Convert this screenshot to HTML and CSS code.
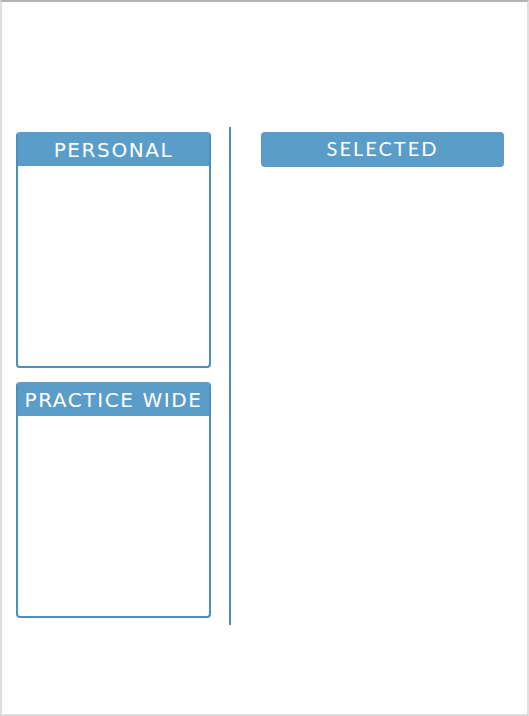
FILE: index.html
```html
<!DOCTYPE html>
<html lang="en">
<head>
    <meta charset="UTF-8">
    <title>Lists</title>
    <link rel="stylesheet" href="styles.css">
</head>
<body>
<div class="frame">
    <div class="columns">
        <div class="left-col">
            <div class="card">
                <div class="card-head">PERSONAL</div>
                <div class="card-body"></div>
            </div>
            <div class="card">
                <div class="card-head">PRACTICE WIDE</div>
                <div class="card-body"></div>
            </div>
        </div>
        <div class="divider"></div>
        <div class="right-col">
            <div class="selected-head">SELECTED</div>
        </div>
    </div>
</div>
</body>
</html>
```

FILE: styles.css
```css
html, body {
    margin: 0;
    padding: 0;
    background: #fff;
}

.frame {
    box-sizing: border-box;
    width: 529px;
    height: 716px;
    border: 2px solid #dedede;
    border-top-color: #b4b4b4;
    padding: 125px 0 0 14px;
}

.columns {
    display: flex;
    align-items: flex-start;
}

.left-col {
    width: 195px;
    margin-top: 5px;
    display: flex;
    flex-direction: column;
    gap: 14px;
}

.card {
    box-sizing: border-box;
    height: 236px;
    border: 2px solid #4a8fc0;
    border-top: none;
    border-radius: 4px;
    display: flex;
    flex-direction: column;
    overflow: hidden;
}

.card-head {
    height: 34px;
    background-color: #5a9dc8;
    color: #fff;
    font-family: "DejaVu Sans", Verdana, sans-serif;
    font-size: 20px;
    letter-spacing: 1.6px;
    line-height: 36px;
    text-align: center;
    white-space: nowrap;
}

.card-body {
    flex: 1;
}

.divider {
    width: 2px;
    height: 498px;
    margin-left: 18px;
    background-color: #4a8fc0;
}

.right-col {
    width: 243px;
    margin-left: 30px;
    margin-top: 5px;
}

.selected-head {
    height: 35px;
    border-radius: 4px;
    background-color: #5a9dc8;
    color: #fff;
    font-family: Lato, "Open Sans", sans-serif;
    font-size: 20px;
    letter-spacing: 2px;
    line-height: 33px;
    text-align: center;
}
```
